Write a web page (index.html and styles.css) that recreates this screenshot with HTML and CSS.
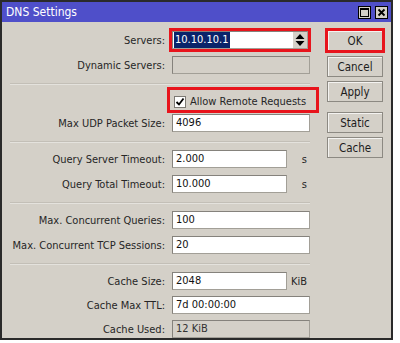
FILE: index.html
```html
<!DOCTYPE html>
<html lang="en">
<head>
  <meta charset="UTF-8">
  <title>DNS Settings</title>
  <link rel="stylesheet" href="styles.css">
</head>
<body>

  <div class="window">
    <div class="titlebar">
      <span class="title">DNS Settings</span>
      <div class="title-buttons">
        <span class="tbtn">
          <svg width="11" height="11" viewBox="0 0 11 11"><rect x="1.5" y="1.5" width="8" height="8" fill="none" stroke="#000" stroke-width="1"/><rect x="1" y="1" width="9" height="2" fill="#000"/></svg>
        </span>
        <span class="tbtn">
          <svg width="11" height="11" viewBox="0 0 11 11"><path d="M2.5 2.5 L8.5 8.5 M8.5 2.5 L2.5 8.5" stroke="#000" stroke-width="1.8"/></svg>
        </span>
      </div>
    </div>

    <div class="content">
      <div class="form">
        <div class="group first">
          <div class="row">
            <label>Servers:</label>
            <div class="input servers marked">
              <span class="sel">10.10.10.1</span>
              <span class="spin">
                <svg width="10" height="14" viewBox="0 0 10 14"><path d="M5 1 L9.5 6 L0.5 6 Z M0.5 8 L9.5 8 L5 13 Z" fill="#000"/></svg>
              </span>
            </div>
          </div>
          <div class="row">
            <label>Dynamic Servers:</label>
            <div class="input disabled"></div>
          </div>
        </div>

        <div class="sep"></div>

        <div class="group tight">
          <div class="row check-row">
            <label></label>
            <div class="check marked">
              <span class="box">
                <svg width="10" height="10" viewBox="0 0 10 10"><path d="M1.5 5 L4 7.5 L8.5 1.5" fill="none" stroke="#000" stroke-width="1.8"/></svg>
              </span>
              <span>Allow Remote Requests</span>
            </div>
          </div>
          <div class="row">
            <label>Max UDP Packet Size:</label>
            <div class="input">4096</div>
          </div>
        </div>

        <div class="sep"></div>

        <div class="group">
          <div class="row">
            <label>Query Server Timeout:</label>
            <div class="pair"><div class="input short">2.000</div><span class="unit">s</span></div>
          </div>
          <div class="row">
            <label>Query Total Timeout:</label>
            <div class="pair"><div class="input short">10.000</div><span class="unit">s</span></div>
          </div>
        </div>

        <div class="sep"></div>

        <div class="group">
          <div class="row">
            <label>Max. Concurrent Queries:</label>
            <div class="input">100</div>
          </div>
          <div class="row">
            <label>Max. Concurrent TCP Sessions:</label>
            <div class="input">20</div>
          </div>
        </div>

        <div class="sep"></div>

        <div class="group last">
          <div class="row">
            <label>Cache Size:</label>
            <div class="pair"><div class="input short">2048</div><span class="unit">KiB</span></div>
          </div>
          <div class="row">
            <label>Cache Max TTL:</label>
            <div class="input">7d 00:00:00</div>
          </div>
          <div class="row">
            <label>Cache Used:</label>
            <div class="input disabled">12 KiB</div>
          </div>
        </div>
      </div>

      <div class="buttons">
        <button class="marked">OK</button>
        <button class="cancel">Cancel</button>
        <button class="apply">Apply</button>
        <button class="static">Static</button>
        <button class="cache">Cache</button>
      </div>
    </div>
  </div>

</body>
</html>
```

FILE: styles.css
```css
body {
  margin: 0;
  background: #fff;
  font-family: "DejaVu Sans Condensed", "DejaVu Sans", sans-serif;
  font-stretch: condensed;
  font-size: 11px;
  color: #262626;
}
.window {
  width: 389px;
  height: 336px;
  border: 2px solid #2a2a2a;
  background: #d4d0c8;
}
.titlebar {
  height: 20px;
  background: #4f4fc9;
  display: flex;
  align-items: center;
  justify-content: space-between;
}
.title {
  color: #fff;
  font-size: 12px;
  padding-left: 4px;
}
.title-buttons {
  display: flex;
  gap: 4px;
  padding-right: 3px;
}
.tbtn {
  width: 13px;
  height: 13px;
  box-sizing: border-box;
  border: 1px solid #000;
  background: #d4d0c8;
  display: flex;
  align-items: center;
  justify-content: center;
}
.content {
  display: flex;
}
.form {
  width: 308px;
  padding-top: 9px;
}
.row {
  display: grid;
  grid-template-columns: 163px 138px;
  column-gap: 7px;
  align-items: center;
  height: 18px;
}
.row + .row {
  margin-top: 7px;
}
.last .row + .row {
  margin-top: 6px;
}
.row label {
  text-align: right;
  white-space: nowrap;
}
.sep {
  margin: 9px 0 7px 8px;
  width: 300px;
  border-top: 1px solid #c3bfb7;
  border-bottom: 1px solid #e4e2dd;
}
.input {
  height: 18px;
  box-sizing: border-box;
  background: #fff;
  border: 1px solid #a29f97;
  border-top-color: #85827c;
  border-left-color: #85827c;
  padding: 0 3px;
  line-height: 16px;
  color: #111;
  white-space: nowrap;
}
.input.disabled {
  background: #d4d0c8;
  color: #333;
}
.input.short {
  width: 115px;
}
.pair {
  display: flex;
  align-items: center;
}
.unit {
  flex: 1;
  text-align: right;
  padding-right: 3px;
}
.servers {
  display: flex;
  justify-content: space-between;
  padding: 0 0 0 1px;
  margin-right: 2px;
}
.sel {
  background: #0a246a;
  color: #fff;
  padding: 0 1px;
}
.spin {
  width: 14px;
  background: #d4d0c8;
  display: flex;
  align-items: center;
  justify-content: center;
}
.marked {
  outline: 3px solid #e8141c;
  outline-offset: 0;
}
.tight .row + .row {
  margin-top: 4px;
}
.check-row {
  height: 20px;
  margin-top: -2px;
}
.check {
  margin-left: -2px;
  width: 146px;
  height: 20px;
  box-sizing: border-box;
  padding: 3px 0 0 4px;
  display: flex;
  align-items: center;
  gap: 4px;
  white-space: nowrap;
}
.check .box {
  width: 12px;
  height: 12px;
  box-sizing: border-box;
  background: #fff;
  border: 1px solid #7c7973;
  display: flex;
  align-items: center;
  justify-content: center;
}
.buttons {
  margin-left: 17px;
  padding-top: 8px;
  display: flex;
  flex-direction: column;
  gap: 4px;
}
button {
  width: 56px;
  height: 21px;
  padding: 0;
  font: inherit;
  font-size: 11.5px;
  color: #1c1c1c;
  background: #d4d0c8;
  border: 1px solid #8c8982;
  box-shadow: inset 1px 1px #f4f3f1;
}
button.marked {
  outline-offset: -1px;
}
button.cancel {
  margin-top: 1px;
}
button.static {
  margin-top: 6px;
}
```
